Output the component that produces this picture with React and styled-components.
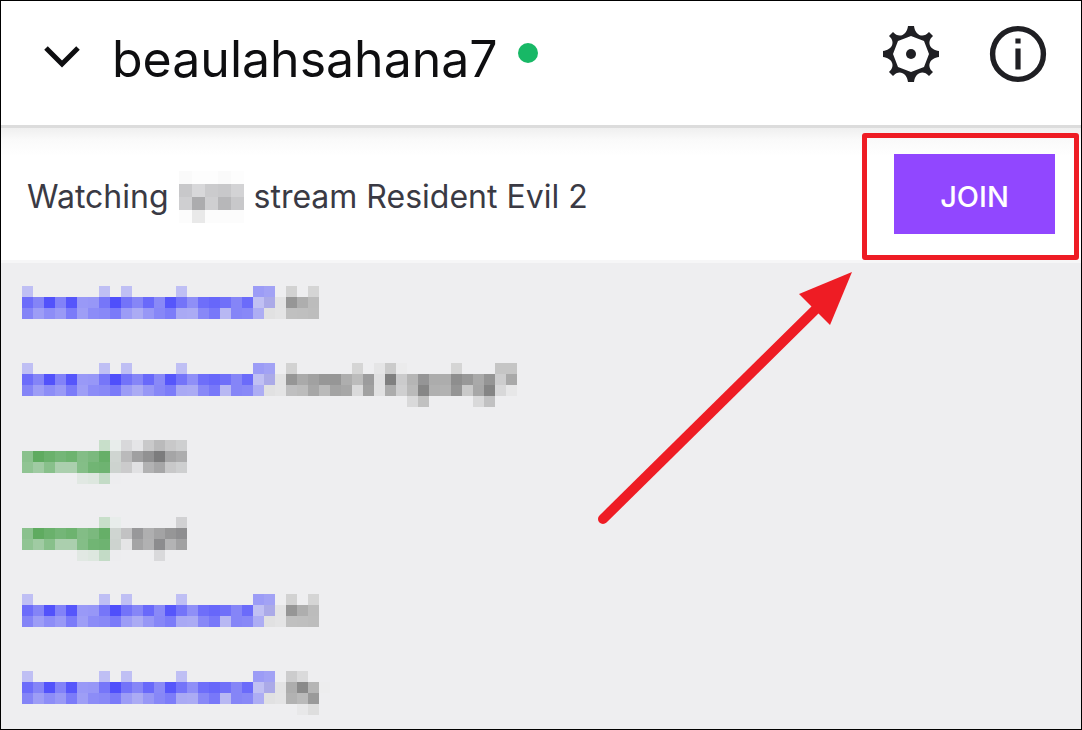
import styled, { createGlobalStyle } from 'styled-components'

const GlobalStyle = createGlobalStyle`
  * {
    box-sizing: border-box;
  }

  body {
    margin: 0;
    font-family: Inter, 'Liberation Sans', sans-serif;
    background: #eeeef0;
  }
`

// one array entry per mosaic line, one colour per cell ('.' leaves the cell empty)
const line = (text) => text.split(' ').map((c) => (c === '.' ? '' : `#${c}`))

const blueName = [
  line('bfbff4 . . . . . . bfbff4 . bfbff4 . . . . bfbff4 . . . . . . 9c9cf6 a2a2f5 .'),
  line('6c6cfa 8484f7 5252fb 8282f8 5656fb 9999f7 9797f7 7676f9 4f4ffb 7373f9 8686f7 6969fa 8989f7 5656fb 7474f9 8f8ff7 6e6efa 6767fa 7070f9 8585f7 6b6bfa c0c0f3 abaae8 e3e3e4'),
  line('8484f7 9d9df6 8d8df7 9999f6 7b7bf9 9e9ef6 8c8cf7 8888f7 7a7af9 9c9cf6 ababf4 9797f6 8787f7 7c7cf9 a9a9f4 ababf4 8888f7 7878f9 b8b8f3 8585f7 8888f7 adadf4 e1e1e2 e4e4e5'),
]

const greenName = [
  line('. . . . . . . c8dfca e8edeb'),
  line('8ac18d 5fab60 6ab16c 74b677 6db36f 83bd86 7bb97e 66af68 cfd5d1'),
  line('90c493 a0cba3 88c08b abcfae abcfae 84be87 71b574 6eb371 cdd3cf'),
  line('. . . . . e1e8e3 dde7df c3dbc6 ededef'),
]

const hi = [
  line('d2d2d2 . d5d5d5'),
  line('969696 aeaeae bcbcbc'),
  line('c0c0c0 bfbfbf bdbdbd'),
]

const question = [
  line('d2d2d2 . . . . . d5d5d5 . e5e5e6 cbcbcb ebebec . . . . d5d5d5 . . . c5c5c5 c5c5c5'),
  line('969696 aaaaaa a1a1a1 979797 969696 aeaeae bcbcbc 9c9c9d e0e0e1 808080 cbcbcc b5b5b5 959596 acacac adadad 8e8e8e 989898 a9a9a9 959595 cdcdce a9a9a9'),
  line('bfbfc0 bcbcbc a7a7a7 bababa a3a3a3 a7a7a7 dadadb a1a1a1 e1e1e2 acacac cfcfd0 bababa 868686 b0b0b0 b2b2b2 959595 c9c9c9 a7a7a7 858585 d8d8d9 e7e7e8'),
  line('. . . . . . . . . . . d9d9da c1c1c1 . . . . d9d9da c1c1c2 . .'),
]

const greyOne = [
  line('d8d8da e5e5e7 c9c9ca bababb c8c8c9 cecfd0'),
  line('bababb a0a0a1 919192 7c7c7d a5a5a6 adadae'),
  line('cbcbcc e1e1e3 b2b2b3 a6a6a7 c8c8c9 cecfd0'),
]

const greyTwo = [
  line('. . . . . d1d1d3'),
  line('c2c2c3 98989a afafb0 a3a3a4 969697 8e8e90'),
  line('e5e5e6 a4a4a5 b1b1b2 8c8c8e b3b3b4 a1a1a2'),
  line('. . . d9d9db . .'),
]

const short = [
  line('cccccd dadadb . .'),
  line('adadad 8a8a8a b5b5b5 ededee'),
  line('b2b2b2 bababa 9a9a9a .'),
  line('. e8e8e9 dedede .'),
]

const hiddenWord = [
  line('fafafa fdfdfd fdfdfd fafafa fdfdfd'),
  line('c8c8ca d8d8da cbcbcd c8c8ca d3d3d5'),
  line('cfcfd1 acacae cfcfd1 b7b7b9 c8c8ca'),
  line('fcfcfc e9e9e9 fcfcfc fcfcfc fcfcfc'),
]

const messages = [
  { name: blueName, text: hi },
  { name: blueName, text: question },
  { name: greenName, text: greyOne },
  { name: greenName, text: greyTwo },
  { name: blueName, text: hi },
  { name: blueName, text: short },
]

const Mosaic = ({ lines, cell }) => (
  <MosaicSvg
    width={lines[0].length * cell}
    height={4 * cell}
    shapeRendering="crispEdges"
    aria-hidden="true"
  >
    {lines.map((cells, y) =>
      cells.map((fill, x) =>
        fill ? (
          <rect key={`${x}-${y}`} x={x * cell} y={y * cell} width={cell} height={cell} fill={fill} />
        ) : null
      )
    )}
  </MosaicSvg>
)

const GearIcon = () => (
  <svg width="58" height="58" viewBox="-29 -29 58 58" aria-hidden="true">
    <path
      fill="#1f1f23"
      fillRule="evenodd"
      d="M-3 -28H3C4 -19 12 -15 18 -22L22 -18C15 -12 19 -4 28 -3V3C19 4 15 12 22 18L18 22C12 15 4 19 3 28H-3C-4 19 -12 15 -18 22L-22 18C-15 12 -19 4 -28 3V-3C-19 -4 -15 -12 -22 -18L-18 -22C-12 -15 -4 -19 -3 -28ZM0 -18L-13 -13L-18 0L-13 13L0 18L13 13L18 0L13 -13Z"
    />
    <circle r="5" fill="#1f1f23" />
  </svg>
)

const InfoIcon = () => (
  <svg width="58" height="58" viewBox="-29 -29 58 58" aria-hidden="true">
    <circle r="25.4" fill="none" stroke="#1f1f23" strokeWidth="5.4" />
    <path fill="#1f1f23" d="M-2.6 -15.5H2.6V-10.5H-2.6ZM-2.6 -5.5H2.6V15.5H-2.6Z" />
  </svg>
)

const ChevronIcon = () => (
  <svg width="36" height="28" viewBox="0 0 36 28" aria-hidden="true">
    <path d="M2 3L18 19L34 3" fill="none" stroke="#0e0e10" strokeWidth="5" />
  </svg>
)

const App = () => {
  return (
    <Wrapper>
      <GlobalStyle />
      <Header>
        <Channel>
          <IconButton type="button" aria-label="Collapse">
            <ChevronIcon />
          </IconButton>
          <Title>beaulahsahana7</Title>
          <Status />
        </Channel>
        <Actions>
          <IconButton type="button" aria-label="Settings">
            <GearIcon />
          </IconButton>
          <IconButton type="button" aria-label="Info">
            <InfoIcon />
          </IconButton>
        </Actions>
      </Header>
      <Activity>
        <ActivityText>
          <span>Watching</span>
          <Mosaic lines={hiddenWord} cell={13} />
          <span>stream Resident Evil 2</span>
        </ActivityText>
        <JoinFrame>
          <JoinButton type="button">JOIN</JoinButton>
        </JoinFrame>
      </Activity>
      <Chat>
        {messages.map((message, i) => (
          <Message key={i}>
            <Mosaic lines={message.name} cell={11} />
            <Mosaic lines={message.text} cell={11} />
          </Message>
        ))}
        <Arrow width="258" height="256" viewBox="0 0 258 256" aria-hidden="true">
          <path d="M8 248L223 36" stroke="#ee1c24" strokeWidth="10" strokeLinecap="round" />
          <path d="M257 1L204 23L235 54Z" fill="#ee1c24" />
        </Arrow>
      </Chat>
    </Wrapper>
  )
}

const Wrapper = styled.main`
  display: flex;
  flex-direction: column;
  min-height: 100vh;
  border: 1px solid #000;
`

const Header = styled.header`
  display: flex;
  align-items: flex-start;
  justify-content: space-between;
  padding: 24px 34px 36px 43px;
  background: #fff;
`

const Channel = styled.div`
  display: flex;
  align-items: center;
  padding-top: 4px;
`

const IconButton = styled.button`
  display: flex;
  padding: 0;
  border: none;
  background: none;
  cursor: pointer;
`

const Title = styled.h1`
  margin: 0 0 0 32px;
  font-size: 50px;
  font-weight: 400;
  line-height: 60px;
  color: #0e0e10;
`

const Status = styled.span`
  width: 20px;
  height: 20px;
  margin: 0 0 12px 20px;
  border-radius: 50%;
  background: #18b866;
`

const Actions = styled.div`
  display: flex;
  gap: 49px;
`

const Activity = styled.section`
  display: flex;
  align-items: center;
  justify-content: space-between;
  padding: 5px 2px 0 26px;
  border-top: 3px solid #dcdcdc;
  border-bottom: 3px solid #f6f6f7;
  background: linear-gradient(#efefef, #fafafa 12px, #fff 28px);
`

const ActivityText = styled.p`
  display: flex;
  align-items: center;
  gap: 10px;
  margin: 0;
  font-size: 32px;
  line-height: 40px;
  color: #3a3a44;
`

const MosaicSvg = styled.svg`
  display: block;
  flex: none;
`

const JoinFrame = styled.div`
  padding: 16px 19px 21px 27px;
  border: 5px solid #ee1c24;
  border-radius: 3px;
`

const JoinButton = styled.button`
  display: block;
  width: 161px;
  height: 80px;
  padding: 5px 0 0;
  border: none;
  background: #9147ff;
  color: #fff;
  font-family: inherit;
  font-size: 29px;
  font-weight: 500;
  cursor: pointer;
`

const Chat = styled.section`
  position: relative;
  display: flex;
  flex: 1;
  flex-direction: column;
  gap: 33px;
  padding: 23px 21px 14px;
  background: #eeeef0;
`

const Message = styled.div`
  display: flex;
`

const Arrow = styled.svg`
  position: absolute;
  top: 8px;
  right: 228px;
`

export default App
